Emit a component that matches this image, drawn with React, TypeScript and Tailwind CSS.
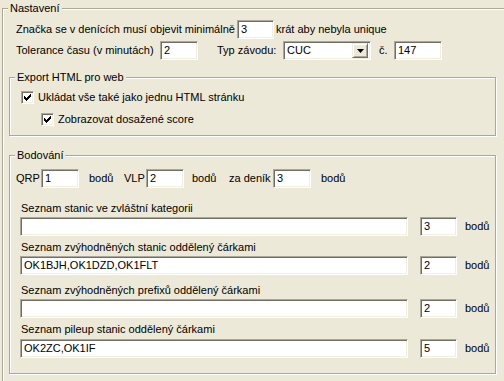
import React from "react";

const font = "font-['Liberation_Sans',Arial,sans-serif]";

function Edit({ w, value = "", h = "h-[19px]" }: { w: string; value?: string; h?: string }) {
  return (
    <div
      className={`${w} ${h} shrink-0 bg-white border border-t-[#ACA899] border-l-[#ACA899] border-b-white border-r-white shadow-[inset_1px_1px_0_#716F64,inset_-1px_-1px_0_#F1EFE2] flex items-center pl-[3px] text-[11px] leading-none text-black`}
    >
      {value}
    </div>
  );
}

function Check() {
  const cols = [2, 3, 4, 3, 2, 1, 0];
  return (
    <div className="w-[13px] h-[13px] shrink-0 bg-white border border-t-[#ACA899] border-l-[#ACA899] border-b-white border-r-white shadow-[inset_1px_1px_0_#716F64,inset_-1px_-1px_0_#F1EFE2] flex items-center justify-center">
      <svg width="7" height="7" viewBox="0 0 7 7" shapeRendering="crispEdges">
        {cols.map((y, i) => (
          <rect key={i} x={i} y={y} width="1" height="3" fill="#000" />
        ))}
      </svg>
    </div>
  );
}

function Group({ title, className = "", children }: { title: string; className?: string; children: React.ReactNode }) {
  return (
    <div className={`relative border border-[#ACA899] shadow-[inset_1px_1px_0_#fff,1px_1px_0_#fff] ${className}`}>
      <span className="absolute -top-[8px] left-[5px] px-[2px] bg-[#ECE9D8] text-[11px] leading-[14px] text-black">
        {title}
      </span>
      {children}
    </div>
  );
}

export default function App() {
  return (
    <div className={`w-[504px] h-[381px] bg-[#ECE9D8] overflow-hidden ${font} text-[11px] text-black`}>
      <div className="pt-[8px] pl-[2px]">
        <Group title="Nastavení" className="w-[540px] h-[400px] border-r-0 border-b-0">
          {/* row 1 */}
          <div className="mt-[11px] ml-[13px] flex items-center h-[19px]">
            <span className="w-[221px] shrink-0 whitespace-nowrap">Značka se v denících musí objevit minimálně</span>
            <Edit w="w-[37px]" value="3" />
            <span className="ml-[2px] whitespace-nowrap">krát aby nebyla unique</span>
          </div>
          {/* row 2 */}
          <div className="mt-[2px] ml-[13px] flex items-center h-[19px]">
            <span className="w-[144px] shrink-0 whitespace-nowrap">Tolerance času (v minutách)</span>
            <Edit w="w-[38px]" value="2" />
            <span className="ml-[19px] w-[66px] shrink-0 whitespace-nowrap">Typ závodu:</span>
            <div className="w-[88px] h-[19px] shrink-0 bg-white border border-t-[#ACA899] border-l-[#ACA899] border-b-white border-r-white shadow-[inset_1px_1px_0_#716F64,inset_-1px_-1px_0_#F1EFE2] flex items-center justify-between pl-[3px] pr-[2px]">
              <span className="leading-none">CUC</span>
              <div className="w-[16px] h-[15px] bg-[#ECE9D8] border border-t-[#F1EFE2] border-l-[#F1EFE2] border-b-[#716F64] border-r-[#716F64] shadow-[inset_1px_1px_0_#fff,inset_-1px_-1px_0_#ACA899] flex items-center justify-center">
                <svg width="7" height="4" viewBox="0 0 7 4">
                  <path d="M0 0 H7 L3.5 4 Z" fill="#000" />
                </svg>
              </div>
            </div>
            <span className="ml-[8px] w-[15px] shrink-0">č.</span>
            <Edit w="w-[48px]" value="147" />
          </div>

          {/* Export HTML */}
          <Group title="Export HTML pro web" className="mt-[17px] ml-[6px] w-[487px] h-[59px]">
            <div className="mt-[13px] ml-[11px] flex items-center gap-[4px] h-[13px]">
              <Check />
              <span className="whitespace-nowrap">Ukládat vše také jako jednu HTML stránku</span>
            </div>
            <div className="mt-[9px] ml-[31px] flex items-center gap-[4px] h-[13px]">
              <Check />
              <span className="whitespace-nowrap">Zobrazovat dosažené score</span>
            </div>
          </Group>

          {/* Bodování */}
          <Group title="Bodování" className="mt-[19px] ml-[6px] w-[487px] h-[219px]">
            <div className="mt-[13px] ml-[6px] flex items-center h-[19px]">
              <span className="w-[25px] shrink-0">QRP</span>
              <Edit w="w-[38px]" value="1" />
              <span className="ml-[10px] w-[35px] shrink-0">bodů</span>
              <span className="w-[22px] shrink-0">VLP</span>
              <Edit w="w-[38px]" value="2" />
              <span className="ml-[8px] w-[37px] shrink-0">bodů</span>
              <span className="w-[44px] shrink-0 whitespace-nowrap">za deník</span>
              <Edit w="w-[38px]" value="3" />
              <span className="ml-[10px]">bodů</span>
            </div>

            <div className="ml-[10px] mt-[14px] flex flex-col">
              <span className="ml-[1px] h-[12px] leading-[12px] whitespace-nowrap">Seznam stanic ve zvláštní kategorii</span>
              <div className="mt-[3px] flex items-center">
                <Edit w="w-[388px]" />
                <span className="w-[12px]" />
                <Edit w="w-[37px]" value="3" />
                <span className="ml-[8px]">bodů</span>
              </div>

              <span className="mt-[5px] ml-[1px] h-[12px] leading-[12px] whitespace-nowrap">Seznam zvýhodněných stanic oddělený čárkami</span>
              <div className="mt-[3px] flex items-center">
                <Edit w="w-[388px]" value="OK1BJH,OK1DZD,OK1FLT" />
                <span className="w-[12px]" />
                <Edit w="w-[37px]" value="2" />
                <span className="ml-[8px]">bodů</span>
              </div>

              <span className="mt-[9px] ml-[1px] h-[12px] leading-[12px] whitespace-nowrap">Seznam zvýhodněných prefixů oddělený čárkami</span>
              <div className="mt-[3px] flex items-center">
                <Edit w="w-[388px]" />
                <span className="w-[12px]" />
                <Edit w="w-[37px]" value="2" />
                <span className="ml-[8px]">bodů</span>
              </div>

              <span className="mt-[5px] ml-[1px] h-[12px] leading-[12px] whitespace-nowrap">Seznam pileup stanic oddělený čárkami</span>
              <div className="mt-[4px] flex items-center">
                <Edit w="w-[388px]" value="OK2ZC,OK1IF" />
                <span className="w-[12px]" />
                <Edit w="w-[37px]" value="5" />
                <span className="ml-[8px]">bodů</span>
              </div>
            </div>
          </Group>
        </Group>
      </div>
    </div>
  );
}
